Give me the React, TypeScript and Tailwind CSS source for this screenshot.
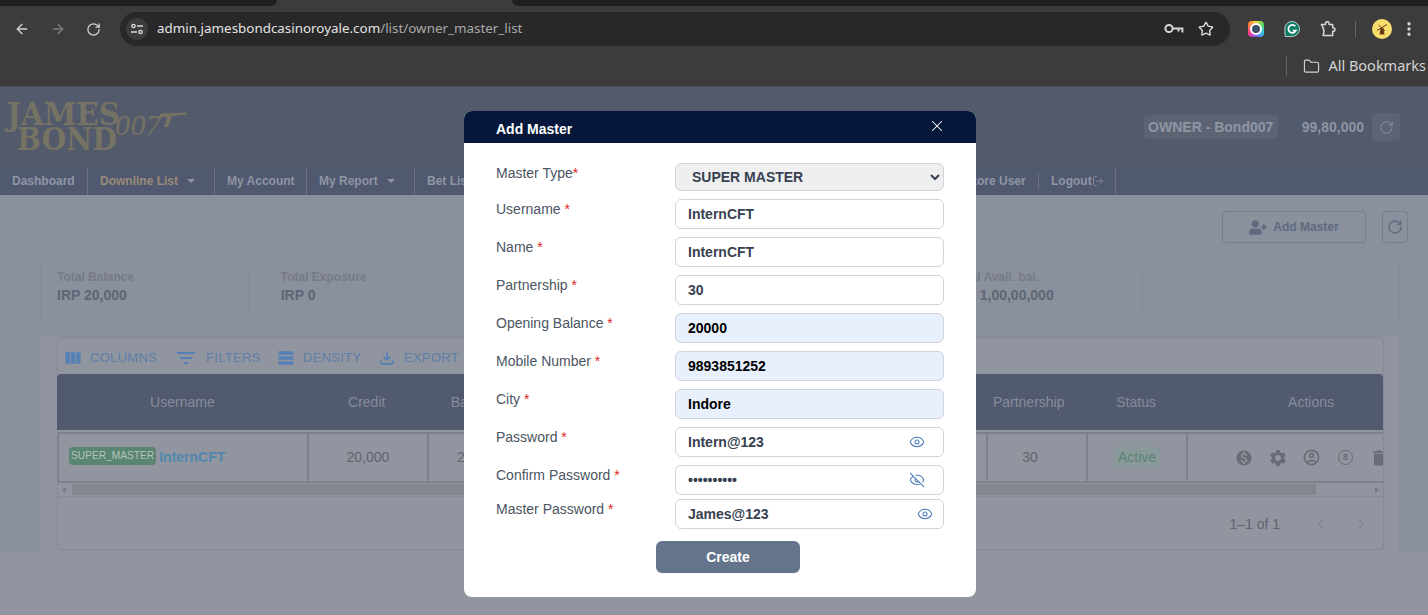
import { ArrowLeft, ArrowRight, ChevronLeft, ChevronRight, Eye, EyeOff, Folder, LogOut, MoreVertical, RotateCw, Star, X } from "lucide-react";
import { MdDelete, MdFilterList, MdMonetizationOn, MdOutlineAccountCircle, MdOutlineFileDownload, MdSettings, MdTableRows, MdViewColumn } from "react-icons/md";
import { FaUserPlus } from "react-icons/fa";

const sans = "font-['Liberation_Sans',Arial,sans-serif]";

const fields = [
  { label: "Username", value: "InternCFT" },
  { label: "Name", value: "InternCFT" },
  { label: "Partnership", value: "30" },
  { label: "Opening Balance", value: "20000", filled: true },
  { label: "Mobile Number", value: "9893851252", filled: true },
  { label: "City", value: "Indore", filled: true },
];

const stats = [
  { title: "Total Balance", value: "IRP 20,000", cell: "w-[208px] pl-[16px] border-r" },
  { title: "Total Exposure", value: "IRP 0", cell: "w-[224px] pl-[32px] border-r" },
  { title: "", value: "", cell: "w-[224px] pl-[33px] border-r" },
  { title: "", value: "", cell: "w-[224px] pl-[33px] border-r" },
  { title: "Total Avail. bal.", value: "IRP 1,00,00,000", cell: "w-[224px] pl-[33px] border-r" },
  { title: "", value: "", cell: "w-[256px]" },
];

const toolbar = [
  { icon: MdViewColumn, label: "Columns", cls: "w-[111px]", size: "h-5 w-5", text: "ml-[7px]" },
  { icon: MdFilterList, label: "Filters", cls: "w-[102px]", size: "h-6 w-6", text: "ml-2" },
  { icon: MdTableRows, label: "Density", cls: "w-[101px]", size: "h-5 w-5", text: "ml-[7px]" },
  { icon: MdOutlineFileDownload, label: "Export", cls: "w-[90px]", size: "h-5 w-5", text: "ml-[7px]" },
];

function Req({ label }: { label: string }) {
  return (
    <label className="block h-5 text-[14px] leading-5 text-[#4b5563]">
      {label} <span className="text-[#dc2626]">*</span>
    </label>
  );
}

function TextField({ value, filled }: { value: string; filled?: boolean }) {
  return (
    <input
      readOnly
      value={value}
      className={`h-[30px] w-full rounded-md border border-[#d1d3de] pl-3 text-[14px] font-bold outline-none ${
        filled ? "bg-[#e8f0fe] text-black" : "bg-white text-[#374151]"
      }`}
    />
  );
}

function PasswordField({ value, hidden, iconClass }: { value: string; hidden?: boolean; iconClass: string }) {
  const Icon = hidden ? EyeOff : Eye;
  return (
    <div className="relative">
      <input
        readOnly
        type={hidden ? "password" : "text"}
        value={value}
        className="h-[30px] w-full rounded-md border border-[#d1d3de] bg-white pl-3 text-[14px] font-bold text-[#374151] outline-none"
      />
      <Icon className={`absolute top-[7px] h-4 w-4 text-[#4a7ab5] ${iconClass}`} strokeWidth={1.6} />
    </div>
  );
}

function BrowserChrome() {
  return (
    <div className="bg-[#3c3c3c]">
      <div className="flex h-1.5 justify-between bg-[#3c3c3c]">
        <div className="w-[277px] rounded-br-lg bg-[#1f2020]" />
        <div className="w-[916px] rounded-bl-lg bg-[#1f2020]" />
      </div>
      <div className="flex h-[46px] items-center text-[#c7c7c7]">
        <div className="flex w-[120px] items-center pl-[14px]">
          <ArrowLeft className="h-4 w-4 text-[#d5d5d5]" strokeWidth={2} />
          <ArrowRight className="ml-5 h-4 w-4 text-[#7c7c7c]" strokeWidth={2} />
          <RotateCw className="ml-5 h-[15px] w-[15px] text-[#d5d5d5]" strokeWidth={2} />
        </div>
        <div className="flex h-[34px] w-[1110px] items-center rounded-full bg-[#282828] pr-4">
          <div className="ml-[6px] flex h-[22px] w-[22px] items-center justify-center rounded-full bg-[#3c3c3c]">
            <svg width="14" height="12" viewBox="0 0 14 12" fill="none" stroke="#dcdcdc" strokeWidth="1.4">
              <circle cx="3.5" cy="3" r="1.6" />
              <path d="M7 3h6M1 9h6" />
              <circle cx="10.5" cy="9" r="1.6" />
            </svg>
          </div>
          <span className="mb-[2px] ml-[9px] font-['Noto_Sans',sans-serif] text-[13.4px] text-[#e3e3e3]">
            admin.jamesbondcasinoroyale.com<span className="text-[#a8a8a8]">/list/owner_master_list</span>
          </span>
          <svg className="ml-auto" width="20" height="12" viewBox="0 0 20 12" fill="none" stroke="#d5d5d5" strokeWidth="2">
            <circle cx="5" cy="5.5" r="3.6" />
            <path d="M8.6 5.5H18.4V9.5M14.5 5.5V8.5" />
          </svg>
          <Star className="ml-[14px] h-[16px] w-[16px] text-[#e0e0e0]" strokeWidth={2} />
        </div>
        <div className="ml-[18px] h-4 w-4 rounded bg-[conic-gradient(#ffd23f,#4cd964,#36c5f0,#7b5cff,#ff3d8b,#ff7a3d,#ffd23f)] p-[2px]">
          <div className="h-full w-full rounded-full border-[2px] border-white bg-[#3d5068]" />
        </div>
        <svg className="ml-5" width="16" height="16" viewBox="0 0 16 16">
          <path d="M8 .5a7.5 7.5 0 1 1 0 15H1.2L.8 8A7.2 7.2 0 0 1 8 .5Z" fill="#0f7b66" stroke="#e5e5e5" strokeWidth=".8" />
          <path d="M11.4 5.2A4 4 0 1 0 12 9.5H8.6" fill="none" stroke="#fff" strokeWidth="1.7" />
        </svg>
        <svg className="ml-5" width="16" height="16" viewBox="0 0 16 16" fill="none" stroke="#d5d5d5" strokeWidth="1.6" strokeLinejoin="round">
          <path d="M1.5 3.5h4v-1a1.8 1.8 0 0 1 3.6 0v1h3.6v3.2h.4a1.8 1.8 0 0 1 0 3.6h-.4v4.2H3.2l.8-4.6-1-3.4z" />
        </svg>
        <div className="ml-[19px] h-4 w-px bg-[#666]" />
        <div className="ml-4 flex h-5 w-5 items-center justify-center rounded-full bg-[#f8de6c]">
          <svg width="14" height="14" viewBox="0 0 14 14">
            <path d="M5.5 6h3l1 6.5h-5z" fill="#6b3a1c" />
            <path d="M2 8.5 12 2.5M3.5 3 10 9" stroke="#6b3a1c" strokeWidth="1" />
          </svg>
        </div>
        <MoreVertical className="ml-[8px] h-[18px] w-[18px] text-[#d5d5d5]" strokeWidth={2.4} />
      </div>
      <div className="flex h-[34px] items-center justify-end pb-[6px] font-['Noto_Sans',sans-serif] text-[14.5px] text-[#d4d4d4]">
        <div className="h-5 w-px bg-[#666]" />
        <Folder className="ml-4 h-[17px] w-[17px]" strokeWidth={1.6} />
        <span className="ml-2 mr-[2px]">All Bookmarks</span>
      </div>
    </div>
  );
}

function Logo() {
  return (
    <svg width="190" height="60" viewBox="0 0 190 60" fill="#767264">
      <text x="7" y="29" fontFamily="DejaVu Serif" fontWeight="700" fontSize="31" textLength="113" lengthAdjust="spacingAndGlyphs">JAMES</text>
      <text x="17" y="54" fontFamily="DejaVu Serif" fontWeight="700" fontSize="31" textLength="100" lengthAdjust="spacingAndGlyphs">BOND</text>
      <text x="115" y="39" fontFamily="Liberation Serif" fontStyle="italic" fontSize="30" textLength="46">007</text>
      <path d="M160 17.5L187 16.5V18.5L172 20L168 31H164L167 21L160 21Z" />
    </svg>
  );
}

function Header() {
  return (
    <>
      <div className={`flex h-[81px] items-start justify-between border-t border-[#4a4f5a] bg-[#525a6b] ${sans}`}>
        <div className="pt-[9px]">
          <Logo />
        </div>
        <div className="flex items-center pt-[26px] pr-[28px] text-[14px] font-bold text-[#8f95a3]">
          <span className="flex h-6 w-[134px] items-center justify-center rounded bg-[#5c6474]">OWNER - Bond007</span>
          <span className="ml-6">99,80,000</span>
          <span className="ml-2 flex h-7 w-7 items-center justify-center rounded bg-[#5c6474]">
            <RotateCw className="h-[15px] w-[15px]" strokeWidth={1.6} />
          </span>
        </div>
      </div>
      <nav className={`flex h-7 items-stretch bg-[#505970] text-[12px] font-bold text-[#8f95a3] ${sans}`}>
        <div className="flex w-[88px] items-center border-r border-[#6b7283] pl-3">Dashboard</div>
        <div className="flex w-[127px] items-center border-r border-[#6b7283] pl-3 text-[#9a8a78]">
          Downline List
          <span className="ml-[9px] h-0 w-0 border-x-[4px] border-t-[4px] border-x-transparent border-t-[#8f95a3]" />
        </div>
        <div className="flex w-[92px] items-center border-r border-[#6b7283] pl-3">My Account</div>
        <div className="flex w-[108px] items-center border-r border-[#6b7283] pl-3">
          My Report
          <span className="ml-[9px] h-0 w-0 border-x-[4px] border-t-[4px] border-x-transparent border-t-[#8f95a3]" />
        </div>
        <div className="flex w-[536px] items-center pl-3">Bet List</div>
        <div className="flex w-[87px] items-center">Restore User</div>
        <div className="my-[6px] w-px bg-[#6b7283]" />
        <div className="flex w-[77px] items-center border-r border-[#6b7283] pl-3">
          Logout
          <LogOut className="h-3 w-3" strokeWidth={1.5} />
        </div>
      </nav>
    </>
  );
}

function Stats() {
  return (
    <div className="mx-10 mt-4 flex h-[62px] w-[1360px] rounded-sm border border-[#858b97] py-2">
      {stats.map((s, i) => (
        <div key={i} className={`${s.cell} border-[#858b97]`}>
          <div className="mt-[1px] h-4 text-[12px] font-bold leading-4 text-[#767b87]">{s.title}</div>
          <div className="mt-[2px] text-[14px] font-bold leading-4 text-[#5f6675]">{s.value}</div>
        </div>
      ))}
    </div>
  );
}

function Table() {
  return (
    <div className="ml-10 mt-4 h-[214px] w-[1359px] bg-[#91959f] pl-[17px] pr-[15px]">
      <div className="h-[213px] overflow-hidden rounded border-y border-r border-[#858993]">
        <div className="flex h-9 items-center rounded-tl border-l border-[#858993] pl-[5px] pt-[3px] text-[#5c7ea8]">
          {toolbar.map(({ icon: Icon, label, cls, size, text }) => (
            <div key={label} className={`flex items-center ${cls}`}>
              <Icon className={`${size} shrink-0 text-[#5580b5]`} />
              <span className={`${text} text-[13px] uppercase tracking-[0.3px]`}>{label}</span>
            </div>
          ))}
        </div>
        <div className="flex h-14 items-center rounded-t bg-[#515a6e] text-[14px] text-[#868c9b]">
          <div className="w-[251px] text-center">Username</div>
          <div className="w-[120px] pr-[2px] text-center">Credit</div>
          <div className="w-[559px] pl-[23px]">Balance</div>
          <div className="w-[100px] pr-[15px] text-center">Partnership</div>
          <div className="w-[100px] text-center">Status</div>
          <div className="w-[197px] pl-[102px]">Actions</div>
        </div>
        <div className="mt-[2px] flex h-[51px] border-y-2 border-[#7d818c] text-[14px] text-[#60646f]">
          <div className="flex w-[252px] items-center border-x-2 border-[#7d818c] pl-[10px]">
            <span className="mb-[3px] rounded bg-[#5a8573] px-[2px] py-[1px] text-[10.2px] leading-4 text-[#b4c4bd]">SUPER_MASTER</span>
            <span className="ml-[3px] font-bold text-[#5187ad]">InternCFT</span>
          </div>
          <div className="flex w-[120px] items-center justify-center border-r-2 border-[#7d818c]">20,000</div>
          <div className="flex w-[559px] items-center border-r-2 border-[#7d818c] pl-[28px]">20,000</div>
          <div className="flex w-[100px] items-center justify-center border-r-2 border-[#7d818c] pr-[14px]">30</div>
          <div className="flex w-[100px] items-center justify-center border-r-2 border-[#7d818c]">
            <span className="rounded bg-[#8a9a9c] px-1 text-[#5a8272]">Active</span>
          </div>
          <div className="flex flex-1 items-center overflow-hidden pl-[47px] text-[#686c76]">
            <MdMonetizationOn className="h-[18px] w-[18px] shrink-0" />
            <MdSettings className="ml-[15px] h-5 w-5 shrink-0" />
            <MdOutlineAccountCircle className="ml-[14px] h-[19px] w-[19px] shrink-0" />
            <span className="ml-[17px] flex h-[15px] w-[15px] shrink-0 items-center justify-center rounded-full border-[1.5px] border-[#686c76] text-[9px] font-bold">8</span>
            <MdDelete className="ml-4 h-5 w-5 shrink-0" />
          </div>
        </div>
        <div className="flex h-[14px] items-center border-b border-l border-[#888c96] pl-[4px]">
          <span className="h-0 w-0 border-y-[3px] border-r-[4px] border-y-transparent border-r-[#767a84]" />
          <div className="ml-[6px] h-[11px] w-[1244px] bg-[#82868f]" />
          <span className="ml-[59px] h-0 w-0 border-y-[3px] border-l-[4px] border-y-transparent border-l-[#767a84]" />
        </div>
        <div className="flex h-[52px] items-center justify-end rounded-bl border-l border-[#858993] pr-[13px] pt-[2px] text-[14px] text-[#60646f]">
          <span>1–1 of 1</span>
          <ChevronLeft className="ml-[32px] h-[18px] w-[18px] text-[#828690]" />
          <ChevronRight className="ml-[22px] h-[18px] w-[18px] text-[#828690]" />
        </div>
      </div>
    </div>
  );
}

function Modal() {
  return (
    <div className={`absolute left-[464px] top-[111px] w-[512px] overflow-hidden rounded-lg bg-white ${sans}`}>
      <div className="flex h-8 items-center justify-between bg-[#05173a] pl-8 pr-[30px] text-white">
        <h3 className="mt-[4px] text-[14px] font-bold">Add Master</h3>
        <X className="mb-[2px] h-[18px] w-[18px]" strokeWidth={1.4} />
      </div>
      <div className="px-8 pb-6 pt-5">
        <div className="grid grid-cols-[179px_269px] gap-y-2">
          <label className="h-5 text-[14px] leading-5 text-[#4b5563]">
            Master Type<span className="text-[#dc2626]">*</span>
          </label>
          <select
            defaultValue="SUPER MASTER"
            className="h-7 w-full rounded-md border border-[#d1d3de] bg-[#efefef] pl-3 text-[14px] font-bold text-[#374151]"
          >
            <option>SUPER MASTER</option>
            <option>MASTER</option>
          </select>
          {fields.map((f) => (
            <div key={f.label} className="contents">
              <Req label={f.label} />
              <TextField value={f.value} filled={f.filled} />
            </div>
          ))}
          <Req label="Password" />
          <PasswordField value="Intern@123" iconClass="right-[19px]" />
          <Req label="Confirm Password" />
          <PasswordField value="Intern@123" hidden iconClass="right-[19px]" />
          <div className="-mt-1">
            <Req label="Master Password" />
          </div>
          <div className="-mt-1">
            <PasswordField value="James@123" iconClass="right-[11px]" />
          </div>
        </div>
        <button type="button" className="ml-40 mt-3 block h-8 w-36 rounded-md bg-[#64748b] text-[14px] font-bold text-white">
          Create
        </button>
      </div>
    </div>
  );
}

export default function App() {
  return (
    <div className="relative h-[615px] w-[1428px] overflow-hidden bg-[#91959f]">
      <BrowserChrome />
      <Header />
      <div className={`h-[356px] bg-[#8a909c] ${sans}`}>
        <div className="flex justify-end pt-4 pr-5">
          <button type="button" className="flex h-8 w-36 items-center justify-center rounded border border-[#767f90] text-[12px] font-bold text-[#5f6a80]">
            <FaUserPlus className="mr-[6px] h-[17px] w-[18px]" />
            Add Master
          </button>
          <button type="button" className="ml-4 flex h-8 w-[26px] items-center justify-center rounded border border-[#767f90] text-[#5f6a80]">
            <RotateCw className="h-[16px] w-[16px]" strokeWidth={2} />
          </button>
        </div>
        <Stats />
        <Table />
      </div>
      <Modal />
    </div>
  );
}
